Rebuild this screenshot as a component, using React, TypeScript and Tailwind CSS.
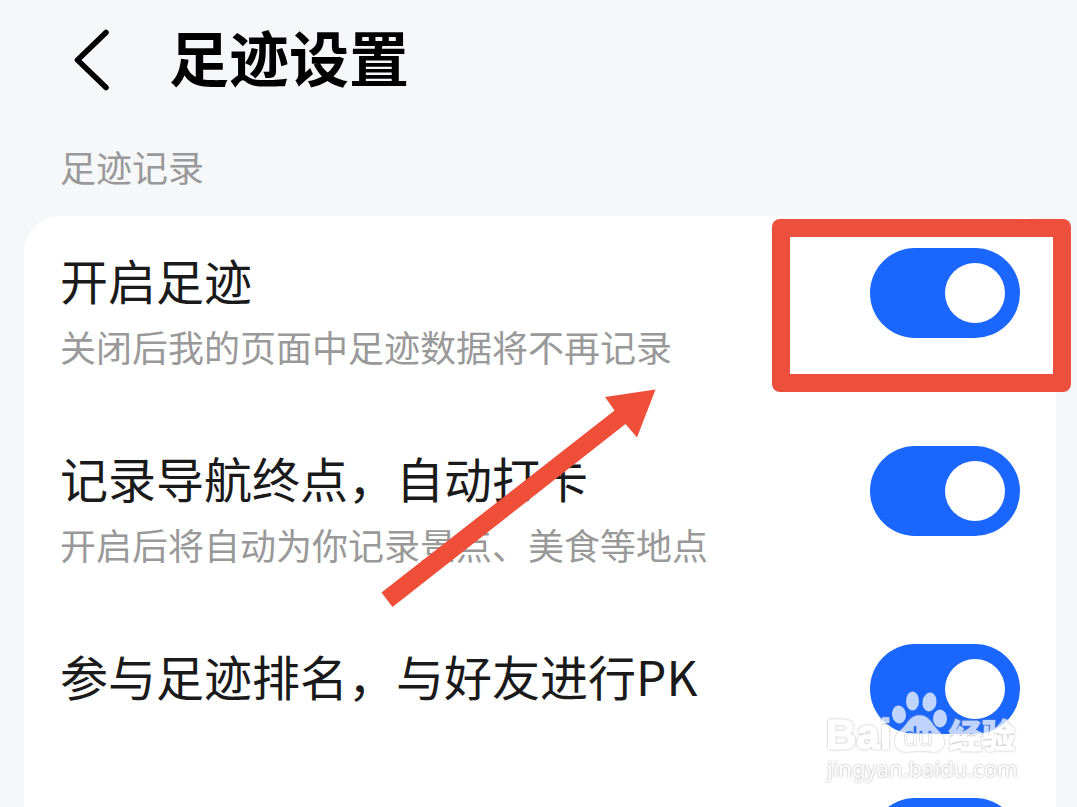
import React from 'react';

interface SettingItem {
  id: string;
  title?: string;
  desc?: string;
  highlight?: boolean;
}

const items: SettingItem[] = [
  { id: 'enable', title: '开启足迹', desc: '关闭后我的页面中足迹数据将不再记录', highlight: true },
  { id: 'auto', title: '记录导航终点，自动打卡', desc: '开启后将自动为你记录景点、美食等地点' },
  { id: 'rank', title: '参与足迹排名，与好友进行PK' },
  { id: 'more' },
];

function Toggle({ id, checked, onChange }: { id: string; checked: boolean; onChange: () => void }) {
  return (
    <input
      id={id}
      type="checkbox"
      role="switch"
      checked={checked}
      onChange={onChange}
      className="block h-[90px] w-[150px] cursor-pointer appearance-none rounded-full bg-[#c8cacd] p-[15px] before:block before:size-[60px] before:rounded-full before:bg-white checked:bg-[#1a66ff] checked:before:ml-auto"
    />
  );
}

function SettingRow({ item }: { item: SettingItem }) {
  const [on, setOn] = React.useState(true);

  return (
    <li className="flex items-start justify-between px-9 py-8">
      <label htmlFor={item.id} className="min-w-0 flex-1">
        {item.title && <span className="block text-[48px] leading-[62px] whitespace-nowrap text-[#1a1a1a]">{item.title}</span>}
        {item.desc && <span className="block text-4xl leading-[72px] whitespace-nowrap text-[#999999]">{item.desc}</span>}
      </label>
      <div className="relative shrink-0">
        <Toggle id={item.id} checked={on} onChange={() => setOn(!on)} />
        {item.highlight && (
          <div className="pointer-events-none absolute -top-[29px] -left-[98px] h-[173px] w-[299px] rounded-lg bg-[#ec4f3b] [clip-path:polygon(evenodd,0_0,100%_0,100%_100%,0_100%,0_0,18px_18px,281px_18px,281px_155px,18px_155px,18px_18px)]" />
        )}
      </div>
    </li>
  );
}

function Arrow() {
  return (
    <svg className="pointer-events-none absolute top-[172px] left-[356px]" width="278" height="220" viewBox="380 388 278 220" aria-hidden="true">
      <path d="M655.500 389.500 605 397l9.500 13.500L381.500 592.500l11 14.500L625.500 424l11.500 13.500Z" fill="#ef4f38" />
    </svg>
  );
}

function Watermark() {
  return (
    <svg
      className="pointer-events-none absolute right-14 bottom-5 font-['Liberation_Sans','Noto_Sans_CJK_SC',sans-serif]"
      width="200"
      height="100"
      viewBox="822 688 200 100"
      aria-hidden="true"
    >
      <defs>
        {/* the letters in the paw show the switch above its lower edge */}
        <linearGradient id="du" gradientUnits="userSpaceOnUse" x1="0" y1="720" x2="0" y2="748">
          <stop offset="0.5" stopColor="#1a66ff" />
          <stop offset="0.5" stopColor="#ffffff" />
        </linearGradient>
      </defs>
      <g fill="#ffffff" opacity="0.72">
        <ellipse cx="900" cy="715.500" rx="7" ry="9" transform="rotate(-8 900 715.500)" />
        <ellipse cx="913.500" cy="702" rx="6.500" ry="9.500" />
        <ellipse cx="930.500" cy="703" rx="7" ry="9.500" transform="rotate(8 930.500 703)" />
        <ellipse cx="941" cy="719.500" rx="7" ry="9" />
        <g stroke="#ffffff" strokeWidth="1.500" className="drop-shadow-[0_0_1px_#999999]">
          <path d="M920.500 717c6 0 10 4 13 9 4 6 11 9 11 17 0 7-6 10-12 9-8-1-15-1-23 0-7 1-13-3-13-10 0-8 7-10 11-16 3-5 7-9 13-9Z" />
          <text x="827" y="750" fontSize="42" fontWeight="700">Bai</text>
          <text x="950" y="749" fontSize="33" fontWeight="700">经验</text>
        </g>
        <text x="904" y="747" fontSize="27" fill="url(#du)" stroke="#bbbbbb" strokeWidth="0.500">du</text>
        <text x="828" y="778" fontSize="22" className="font-['Noto_Sans',sans-serif] drop-shadow-[0_0_1px_#888888]">jingyan.baidu.com</text>
      </g>
    </svg>
  );
}

export default function App() {
  return (
    <div className="relative h-screen overflow-hidden bg-[#f5f7f9] font-['Noto_Sans_CJK_SC',sans-serif]">
      <header className="flex h-[120px] items-center gap-15 pl-[73px]">
        <button type="button" aria-label="返回" className="text-black">
          <svg width="36" height="64" viewBox="0 0 36 64" fill="none" stroke="currentColor" strokeWidth="5.500" strokeLinecap="round" strokeLinejoin="round">
            <path d="M33 4.500 4.500 32 33 59.500" />
          </svg>
        </button>
        <h1 className="pb-2 text-6xl font-bold text-black">足迹设置</h1>
      </header>

      <h2 className="flex h-24 items-center px-[60px] pb-1 text-4xl text-[#999999]">足迹记录</h2>

      <main className="relative mr-[21px] ml-6 rounded-t-[36px] bg-white">
        <ul>
          {items.map(item => (
            <SettingRow key={item.id} item={item} />
          ))}
        </ul>
        <Arrow />
      </main>

      <Watermark />
    </div>
  );
}
